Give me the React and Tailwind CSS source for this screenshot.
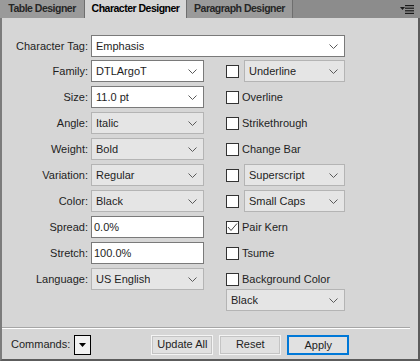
import React from 'react';

const Chevron = () => (
  <svg width="9" height="5" viewBox="0 0 9 5" className="shrink-0">
    <polyline points="0.5,0.5 4.5,4.5 8.5,0.5" fill="none" stroke="#5a5a5a" strokeWidth="1" />
  </svg>
);

const Select = ({ value, width, enabled }) => (
  <div
    className={`flex items-center justify-between h-[22px] border pl-[4px] pr-[6px] ${width} ${
      enabled ? 'bg-white border-[#7a7a7a]' : 'bg-[#e5e5e5] border-[#b4b4b4]'
    }`}
  >
    <span className="truncate">{value}</span>
    <Chevron />
  </div>
);

const TextBox = ({ value }) => (
  <div className="flex items-center h-[22px] w-[113px] bg-white border border-[#7a7a7a] pl-[2px]">
    {value}
  </div>
);

const Checkbox = ({ checked }) => (
  <div className="w-[13px] h-[13px] shrink-0 bg-white border border-[#333333] flex items-center justify-center">
    {checked && (
      <svg width="11" height="11" viewBox="0 0 11 11">
        <polyline points="1,5 4,8.5 10,1.5" fill="none" stroke="#444" strokeWidth="1" />
      </svg>
    )}
  </div>
);

const LeftRow = ({ label, children }) => (
  <div className="flex items-center h-[22px]">
    <span className="w-[86px] text-right shrink-0">{label}</span>
    <div className="ml-[3px]">{children}</div>
  </div>
);

const CheckRow = ({ label, checked }) => (
  <div className="flex items-center h-[22px]">
    <Checkbox checked={checked} />
    <span className="ml-[3px]">{label}</span>
  </div>
);

const CheckSelectRow = ({ value }) => (
  <div className="flex items-center h-[22px]">
    <Checkbox />
    <div className="ml-[5px]">
      <Select value={value} width="w-[101px]" />
    </div>
  </div>
);

const Tab = ({ label, active, width }) => (
  <div
    className={`h-full flex items-center justify-center border-r border-[#6e6e6e] font-bold tracking-[-0.5px] text-[10.5px] ${width} ${
      active ? 'bg-[#d6d6d6] text-black' : 'bg-[#9a9a9a] text-[#262626]'
    }`}
  >
    {label}
  </div>
);

export default function App() {
  return (
    <div className="w-[420px] h-[361px] flex flex-col bg-[#d6d6d6] font-['Liberation_Sans',Arial,sans-serif] text-[11px] text-[#1e1e1e] border-l-2 border-r-2 border-b-2 border-l-[#7c7c7c] border-r-[#5c5c5c] border-b-[#5c5c5c]">
      {/* tab strip */}
      <div className="flex items-stretch h-[18px] bg-[#8c8c8c] -ml-[2px] -mr-[2px]">
        <Tab label="Table Designer" width="w-[85px]" />
        <Tab label="Character Designer" width="w-[102px]" active />
        <Tab label="Paragraph Designer" width="w-[106px]" />
        <div className="flex-1 flex items-center justify-end pr-[6px]">
          <svg width="14" height="9" viewBox="0 0 14 9">
            <polygon points="0,2 5,2 2.5,5" fill="#1a1a1a" />
            <rect x="5" y="0" width="9" height="1.2" fill="#1a1a1a" />
            <rect x="5" y="2.6" width="9" height="1.2" fill="#1a1a1a" />
            <rect x="5" y="5.2" width="9" height="1.2" fill="#1a1a1a" />
            <rect x="5" y="7.8" width="9" height="1.2" fill="#1a1a1a" />
          </svg>
        </div>
      </div>

      {/* body */}
      <div className="pt-[17px]">
        <LeftRow label="Character Tag:">
          <Select value="Emphasis" width="w-[254px]" enabled />
        </LeftRow>

        <div className="flex mt-[3px]">
          <div className="flex flex-col gap-[4px]">
            <LeftRow label="Family:">
              <Select value="DTLArgoT" width="w-[113px]" enabled />
            </LeftRow>
            <LeftRow label="Size:">
              <Select value="11.0 pt" width="w-[113px]" enabled />
            </LeftRow>
            <LeftRow label="Angle:">
              <Select value="Italic" width="w-[113px]" />
            </LeftRow>
            <LeftRow label="Weight:">
              <Select value="Bold" width="w-[113px]" />
            </LeftRow>
            <LeftRow label="Variation:">
              <Select value="Regular" width="w-[113px]" />
            </LeftRow>
            <LeftRow label="Color:">
              <Select value="Black" width="w-[113px]" />
            </LeftRow>
            <LeftRow label="Spread:">
              <TextBox value="0.0%" />
            </LeftRow>
            <LeftRow label="Stretch:">
              <TextBox value="100.0%" />
            </LeftRow>
            <LeftRow label="Language:">
              <Select value="US English" width="w-[113px]" />
            </LeftRow>
          </div>

          <div className="ml-[22px] flex flex-col">
            <div className="flex flex-col gap-[4px]">
              <CheckSelectRow value="Underline" />
              <CheckRow label="Overline" />
              <CheckRow label="Strikethrough" />
              <CheckRow label="Change Bar" />
              <CheckSelectRow value="Superscript" />
              <CheckSelectRow value="Small Caps" />
              <CheckRow label="Pair Kern" checked />
              <CheckRow label="Tsume" />
              <CheckRow label="Background Color" />
            </div>
            <div className="-mt-[1px]">
              <Select value="Black" width="w-[119px]" />
            </div>
          </div>
        </div>
      </div>

      {/* separator */}
      <div className="mt-auto w-[408px] border-t border-t-[#a6a6a6] border-b border-b-white" />

      {/* footer */}
      <div className="flex items-center h-[30px] pt-[1px]">
        <span className="ml-[9px]">Commands:</span>
        <div className="ml-[4px] w-[17px] h-[20px] border border-black bg-[#f2f2f2] flex items-center justify-center">
          <svg width="7" height="4" viewBox="0 0 7 4">
            <polygon points="0,0 7,0 3.5,4" fill="#000" />
          </svg>
        </div>
        <button className="ml-[60px] w-[62px] h-[20px] bg-[#e1e1e1] border border-[#f4f4f4] outline outline-1 outline-[#c4c4c4] -outline-offset-2">
          Update All
        </button>
        <button className="ml-[6px] w-[62px] h-[20px] bg-[#e1e1e1] border border-[#f4f4f4] outline outline-1 outline-[#c4c4c4] -outline-offset-2">
          Reset
        </button>
        <button className="ml-[6px] w-[62px] h-[20px] bg-[#e1e1e1] border-2 border-[#0078d7]">
          Apply
        </button>
      </div>
    </div>
  );
}
